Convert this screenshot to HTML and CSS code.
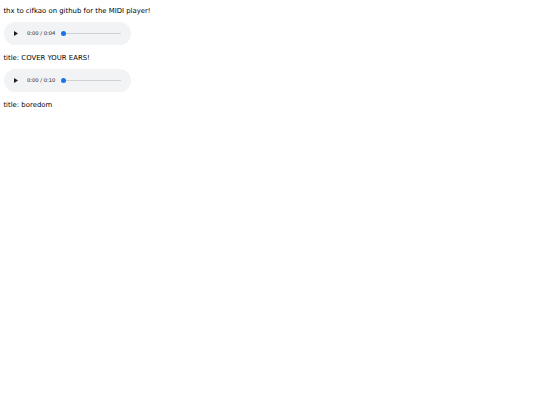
FILE: index.html
```html
<!DOCTYPE html>
<html>
<head>
<meta charset="utf-8">
<link rel="stylesheet" href="styles.css">
</head>
<body>
<div class="page">
  <div class="line">thx to cifkao on github for the MIDI player!</div>
  <div class="player">
    <svg class="play" width="4" height="5" viewBox="0 0 4 5"><path d="M0 0 L4 2.5 L0 5 Z" fill="#1f1f1f"/></svg>
    <span class="time">0:00 / 0:04</span>
    <div class="track"><div class="thumb"></div></div>
  </div>
  <div class="line">title: COVER YOUR EARS!</div>
  <div class="player">
    <svg class="play" width="4" height="5" viewBox="0 0 4 5"><path d="M0 0 L4 2.5 L0 5 Z" fill="#1f1f1f"/></svg>
    <span class="time">0:00 / 0:10</span>
    <div class="track"><div class="thumb"></div></div>
  </div>
  <div class="line">title: boredom</div>
</div>
</body>
</html>
```
FILE: styles.css
```css
html, body { margin: 0; padding: 0; background: #fff; }
.page {
  padding: 7.4px 0 0 3.4px;
  display: flex;
  flex-direction: column;
  align-items: flex-start;
}
.line {
  font-family: "DejaVu Sans", Verdana, sans-serif;
  font-size: 6.9px;
  line-height: 8px;
  height: 8px;
  color: #000;
  white-space: nowrap;
}
.player {
  margin: 6.5px 0 9.5px 0.6px;
  width: 127px;
  height: 23px;
  border-radius: 11.5px;
  background: #f1f3f4;
  display: flex;
  align-items: center;
  box-sizing: border-box;
  padding-left: 10px;
}
.play { flex: none; display: block; }
.time {
  margin-left: 9px;
  font-family: "DejaVu Sans", Verdana, sans-serif;
  font-size: 5.2px;
  color: #1f1f1f;
  white-space: nowrap;
}
.track {
  position: relative;
  margin-left: 7px;
  width: 59px;
  height: 1px;
  background: #cfd1d3;
  border-radius: 1px;
}
.thumb {
  position: absolute;
  left: -1px;
  top: -2px;
  width: 5px;
  height: 5px;
  border-radius: 50%;
  background: #1a73e8;
}
```
